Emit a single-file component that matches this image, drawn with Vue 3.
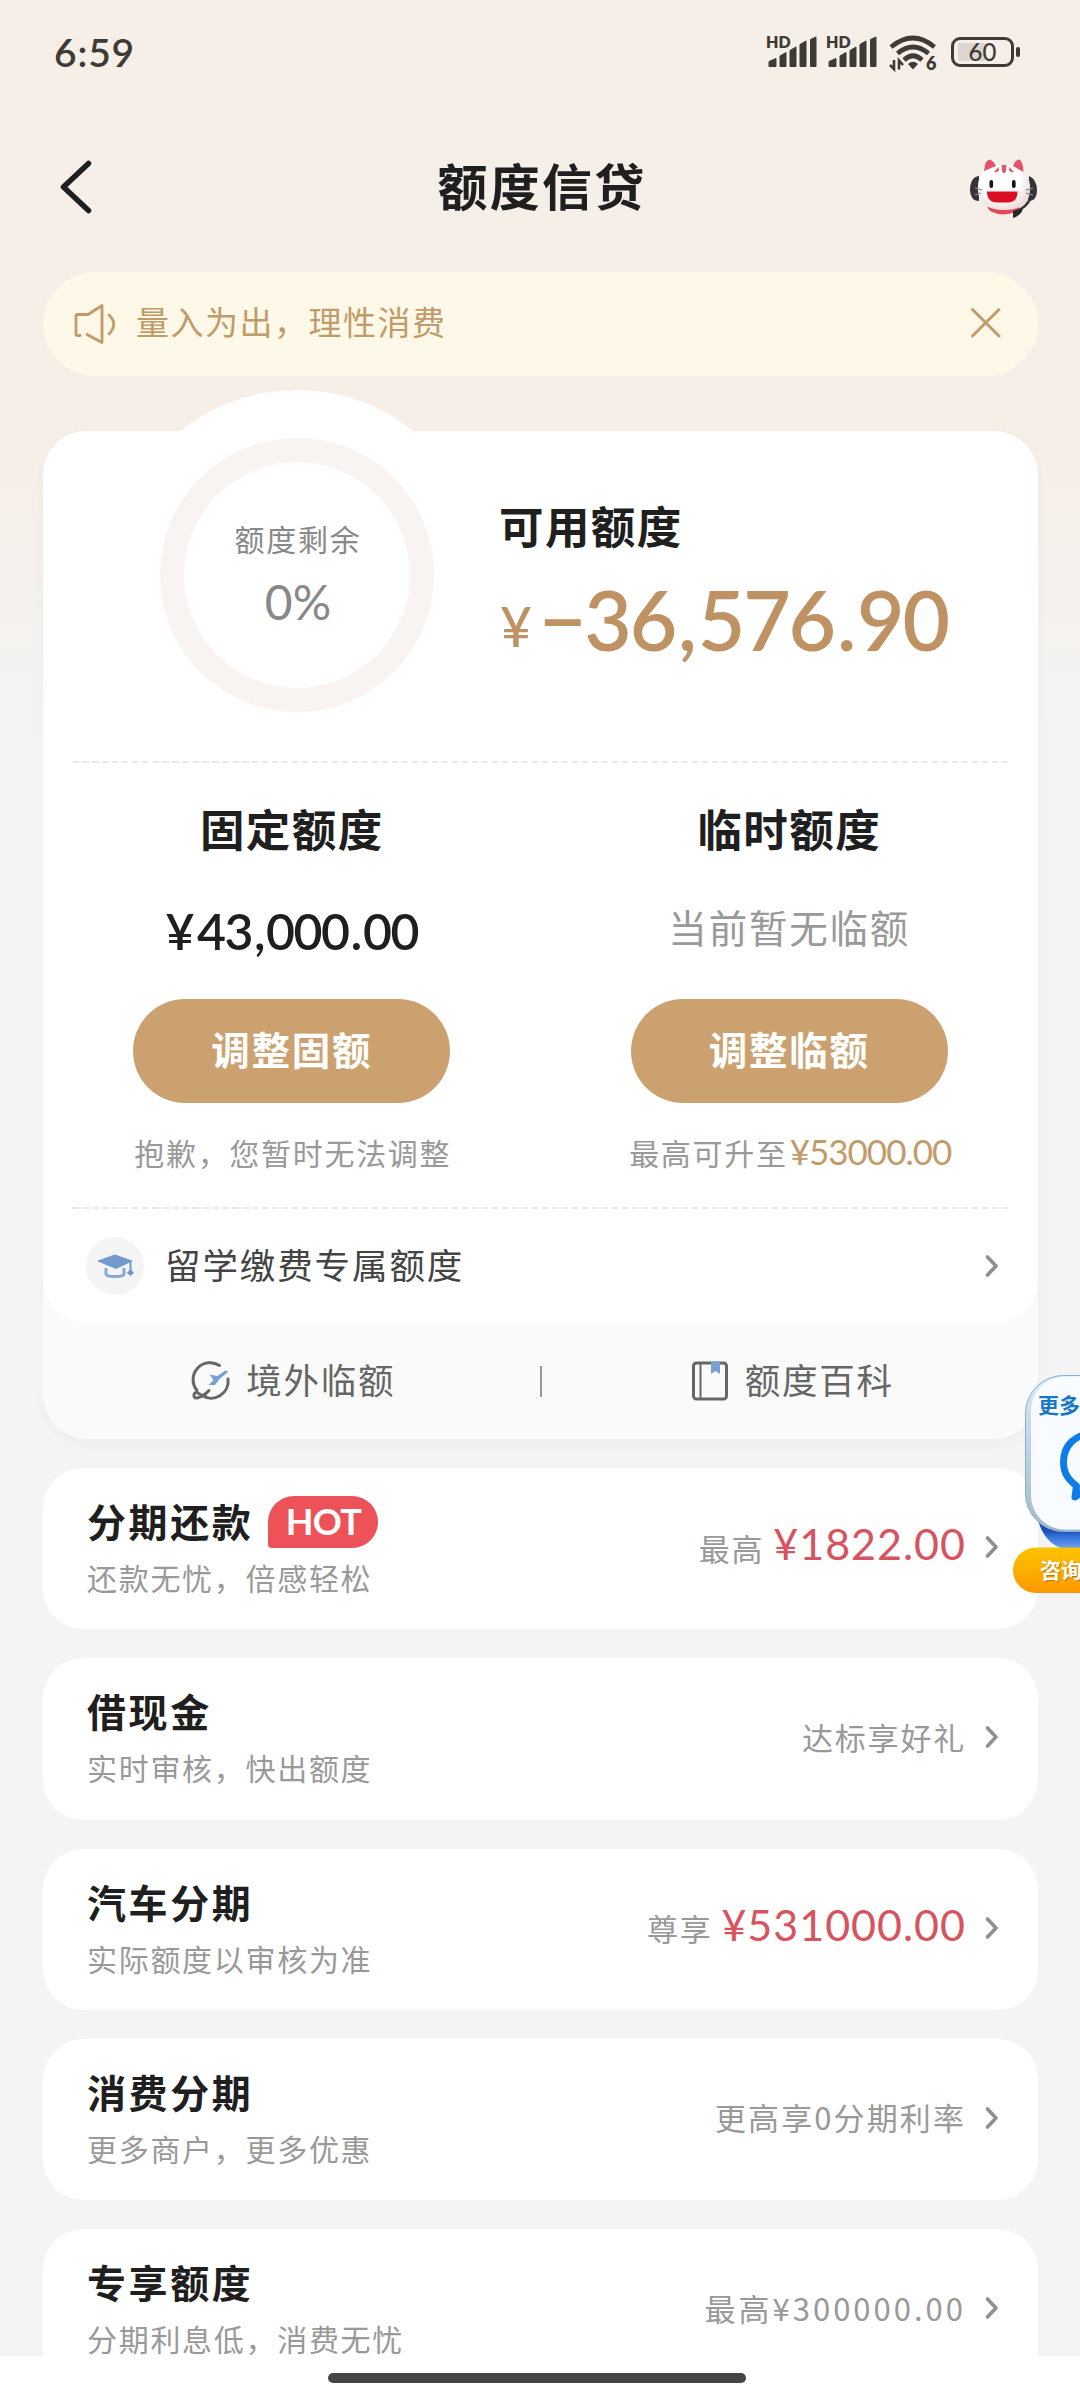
<script setup>
const products = [
  { title: '分期还款', hot: true, desc: '还款无忧，倍感轻松', label: '最高', amount: '¥1822.00' },
  { title: '借现金', desc: '实时审核，快出额度', note: '达标享好礼' },
  { title: '汽车分期', desc: '实际额度以审核为准', label: '尊享', amount: '¥531000.00' },
  { title: '消费分期', desc: '更多商户，更多优惠', note: '更高享0分期利率', noteSpacing: 2.1 },
  { title: '专享额度', desc: '分期利息低，消费无忧', note: '最高¥300000.00', noteSpacing: 3 },
]
const bars = [
  'M1 29.5 v-5 l7-3 v8 z',
  'M12 29.5 v-10.5 l6-3.5 v14 z',
  'M22 29.5 v-16 l6-3.5 v19.500 z',
  'M32 29.500 v-22 l6-3.500 v25.500 z',
  'M42.500 29.500 v-27 l5.500-2.500 v29.500 z',
]
</script>

<template>
  <div class="screen">
    <header class="status">
      <span class="time">6:59</span>
      <div class="signals">
        <div v-for="n in 2" :key="n" class="signal">
          <svg width="50" height="32" viewBox="0 0 50 32">
            <path v-for="b in bars" :key="b" :d="b" fill="#3f3a35" stroke="#3f3a35" stroke-width="1" stroke-linejoin="round" />
          </svg>
          <span class="hd">HD</span>
        </div>
        <svg class="wifi" width="48" height="36" viewBox="0 0 48 36">
          <g fill="none" stroke="#3f3a35" stroke-width="4.600">
            <path d="M2 12 Q24 -6 45.500 12" />
            <path d="M8.500 18.500 Q24 5.500 39.500 18.500" />
            <path d="M15 25 Q24 16.500 33 25" />
          </g>
          <path d="M19 29 q5 -4.500 10 0 l-5 5.500 z" fill="#3f3a35" />
          <path d="M5 25 v9 l-4-4 M10 34.500 v-9 l4 4.500" fill="none" stroke="#3f3a35" stroke-width="2.600" />
          <text x="37" y="35" class="wifi-gen">6</text>
        </svg>
        <div class="battery">
          <span class="battery-level">60</span>
        </div>
      </div>
    </header>

    <nav class="nav">
      <svg class="back" width="34" height="56" viewBox="0 0 34 56">
        <path d="M29.500 4.500 L4.500 28 L29.500 51.500" fill="none" stroke="#1f1f1f" stroke-width="5.500" stroke-linecap="round" stroke-linejoin="round" />
      </svg>
      <h1>额度信贷</h1>
      <svg class="cat" width="70" height="64" viewBox="0 0 70 64">
        <defs>
          <radialGradient id="face" cx=".42" cy=".4" r=".62">
            <stop offset=".6" stop-color="#fff" /><stop offset="1" stop-color="#eedcdc" />
          </radialGradient>
        </defs>
        <path d="M10 19 Q1 20 1 34 Q2 44 10 44 Z M60 19 Q68 22 68 34 Q68 44 59 44 Z" fill="#34343a" />
        <path d="M62 40 Q57 52 46 54" fill="none" stroke="#34343a" stroke-width="2.500" />
        <ellipse cx="34.500" cy="49" rx="16" ry="8.500" fill="#e0485a" />
        <path d="M14 15 Q15 3 21 2 Q25 3 28 8 L43 8 Q46 2 51 2 Q55 5 56 16 Q62 24 61 33 Q60 53 35 53 Q10 53 9 34 Q8 22 14 15 Z" fill="url(#face)" />
        <path d="M15 14 Q16 3 20.500 2.500 Q25 4 27 9 Z M44 9 Q46 3 50.500 2.500 Q54 5 54.500 15 Z" fill="#e65368" />
        <path d="M32.500 8 h5 l-.5 6.500 -2 2 -2 -2z M25 15 l4.500-5 .5 3.500-3 2z M45 15 l-4.500-5 -.5 3.500 3 2z" fill="#e0596b" />
        <rect x="20.500" y="23" width="3.600" height="8" rx="1.800" fill="#151515" />
        <rect x="43" y="23" width="3.600" height="8" rx="1.800" fill="#151515" />
        <path d="M18 34.500 H48.500 Q48.500 45.500 38.500 45.500 H28.500 Q18 45.500 18 34.500 Z" fill="#dc0f22" />
        <path d="M6 31 L13 33 M6 38 L12 36 M64 31 L57 33 M64 38 L57 36" stroke="#8d8a8c" stroke-width="1.300" />
        <path d="M44 54 L54 51 Q53 58 44 61 Z" fill="#26262b" />
      </svg>
    </nav>

    <section class="notice">
      <svg width="43" height="42" viewBox="0 0 43 42">
        <g fill="none" stroke="#c29b6a" stroke-width="2.800" stroke-linecap="round" stroke-linejoin="round">
          <path d="M6 32.500 H3.500 Q2 32.500 2 31 V13 Q2 11.500 3.500 11.500 H14 L28 2.500 V39.500 L13 31.500" />
          <path d="M35 12 Q44.500 21 35 31" />
        </g>
      </svg>
      <span>量入为出，理性消费</span>
      <svg class="close" width="32" height="32" viewBox="0 0 32 32">
        <path d="M2.500 2.500 L29 29 M29 2.500 L2.500 29" stroke="#c29b6a" stroke-width="3" stroke-linecap="round" />
      </svg>
    </section>

    <section class="quota">
      <div class="quota-main">
        <div class="overview">
          <div class="halo">
            <div class="ring">
              <span class="ring-label">额度剩余</span>
              <span class="ring-value">0%</span>
            </div>
          </div>
          <div class="available">
            <h2>可用额度</h2>
            <p class="balance"><small>¥</small>−36<i>,</i>576<i>.</i>90</p>
          </div>
        </div>
        <div class="dash"></div>
        <div class="columns">
          <div class="column">
            <h2>固定额度</h2>
            <p class="fixed"><b>¥</b>43<i>,</i>000<i>.</i>00</p>
            <button>调整固额</button>
            <p class="foot">抱歉，您暂时无法调整</p>
          </div>
          <div class="column">
            <h2>临时额度</h2>
            <p class="none">当前暂无临额</p>
            <button>调整临额</button>
            <p class="foot">最高可升至<b>¥53000.00</b></p>
          </div>
        </div>
        <div class="dash"></div>
        <div class="study">
          <svg width="58" height="58" viewBox="0 0 58 58">
            <circle cx="29" cy="29" r="29" fill="#f4f4f5" />
            <path d="M12 24 L29 18 L46 24 L30 31.500 Z" fill="#7199cc" stroke="#7199cc" stroke-width="1" stroke-linejoin="round" />
            <path d="M20 31 V37 Q20 39.500 29 39.500 Q38 39.500 38 37 V31" fill="none" stroke="#86a8d2" stroke-width="3" />
            <path d="M44.500 25 V34" stroke="#7199cc" stroke-width="2" />
            <path d="M44.500 32 L48 36 L44.500 39 L41 36 Z" fill="#7199cc" />
          </svg>
          <span>留学缴费专属额度</span>
          <svg class="arrow" width="16" height="24" viewBox="0 0 16 24"><path d="M3.500 3 L12 12 L3.500 21" /></svg>
        </div>
      </div>
      <div class="links">
        <div class="link">
          <svg width="38" height="40" viewBox="0 0 38 40">
            <path d="M27.500 4.500 A17 17 0 0 0 5 29.500 M36 18 A17 17 0 0 1 10 34.500 M17 29.500 Q12 35 5 37 Q1.500 37.500 2 34 Q2.500 31 5 31.500 Q10 35 14 35.500" fill="none" stroke="#666" stroke-width="3" stroke-linecap="round" />
            <path d="M17.500 13.500 l8 1.500 7-5 q4-1.500 3 1.500 l-7.500 6 -5 6.500 h-6.500 l5-5 z" fill="#79a0d0" />
          </svg>
          <span>境外临额</span>
        </div>
        <i class="split"></i>
        <div class="link">
          <svg width="38" height="40" viewBox="0 0 38 40">
            <rect x="2.500" y="2" width="33" height="36" rx="3" fill="none" stroke="#666" stroke-width="3" />
            <path d="M9.500 3 V38" stroke="#666" stroke-width="2" />
            <path d="M20 0.500 h9 v12.500 l-4.500-3 -4.500 3z" fill="#79a0d0" />
          </svg>
          <span>额度百科</span>
        </div>
      </div>
    </section>

    <section v-for="p in products" :key="p.title" class="product">
      <div class="info">
        <h3>{{ p.title }}<span v-if="p.hot" class="hot">HOT</span></h3>
        <p>{{ p.desc }}</p>
      </div>
      <div class="side">
        <span v-if="p.note" class="note" :style="{ letterSpacing: (p.noteSpacing || 1.8) + 'px' }">{{ p.note }}</span>
        <template v-else>
          <span class="label">{{ p.label }}</span>
          <span class="amount">{{ p.amount }}</span>
        </template>
        <svg class="arrow" width="16" height="24" viewBox="0 0 16 24"><path d="M3.500 3 L12 12 L3.500 21" /></svg>
      </div>
    </section>

    <aside class="float">
      <svg width="67" height="222" viewBox="0 0 67 222">
        <defs>
          <linearGradient id="pill" x1="0" y1="0" x2="0" y2="1">
            <stop offset="0" stop-color="#fcc400" /><stop offset="1" stop-color="#ff9800" />
          </linearGradient>
          <linearGradient id="base" x1="0" y1="0" x2="0" y2="1">
            <stop offset=".6" stop-color="#1b4fb8" /><stop offset=".75" stop-color="#3a78dc" /><stop offset="1" stop-color="#75a9f5" />
          </linearGradient>
          <linearGradient id="edge" x1="0" y1="0" x2="0" y2="1">
            <stop offset="0" stop-color="#d9ebf9" /><stop offset="1" stop-color="#a5b8c8" />
          </linearGradient>
        </defs>
        <path d="M23 138 Q28 174 56 178 H67 V130 H23 Z" fill="url(#base)" />
        <rect x="12.500" y="3.500" width="160" height="156" rx="38" fill="url(#edge)" stroke="#7fb2da" stroke-width="1" />
        <rect x="18" y="4.500" width="155" height="153" rx="34" fill="#f8fbff" />
        <path d="M85 61 C60 61 50.500 75 50.500 90 C50.500 102 56 108 63.500 114 L62 125 L70 119" fill="none" stroke="#0f7de6" stroke-width="7" stroke-linejoin="round" />
        <rect x="0" y="175.500" width="120" height="45.500" rx="22.700" fill="url(#pill)" />
        <text x="25" y="40.500" class="float-top">更多</text>
        <text x="27" y="205.500" class="float-pill">咨询</text>
      </svg>
    </aside>

    <footer class="home"><i></i></footer>
  </div>
</template>

<style>
body { margin: 0; background: #fff; }
</style>

<style scoped>
.screen {
  position: relative;
  box-sizing: border-box;
  width: 1080px;
  height: 2400px;
  overflow: hidden;
  font-family: "Noto Sans CJK SC", sans-serif;
  color: #1f1f1f;
  background: linear-gradient(#f6efe8 0, #f6efe8 480px, #f4f4f4 740px, #f4f4f4 100%);
}
h1, h2, h3, p { margin: 0; font-weight: 700; }
svg { display: block; flex: none; overflow: visible; }

.status { display: flex; justify-content: space-between; height: 106px; padding: 0 57px 0 54px; box-sizing: border-box; }
.time { font: 600 39px/104px Lato, sans-serif; letter-spacing: 0.800px; color: #3f3a35; }
.signals { display: flex; align-items: flex-start; padding-top: 36px; }
.signal { position: relative; width: 60px; }
.signal svg { margin: 1px 0 0 2px; }
.hd { position: absolute; left: 0; top: -2px; font: 800 16px/16px Lato, sans-serif; color: #3f3a35; }
.wifi { margin: -1px 0 0 3px; }
.wifi-gen { font: 800 18px Lato, sans-serif; fill: #3f3a35; }
.battery {
  position: relative; width: 57px; height: 24px; margin: 1px 9px 0 14px;
  border: 3px solid #3f3a35; border-radius: 9px; text-align: center;
  background: linear-gradient(#ddd5cf, #ddd5cf) 4px 3px / 27px 18px no-repeat;
}
.battery::after { content: ""; position: absolute; right: -9px; top: 7px; width: 4px; height: 10px; border-radius: 2px; background: #3f3a35; }
.battery-level { display: block; font: 500 24px/24px Lato, sans-serif; color: #3f3a35; }

.nav { display: flex; align-items: center; justify-content: space-between; height: 166px; padding: 0 41px 0 59px; box-sizing: border-box; }
.nav h1 { font-size: 50px; line-height: 60px; letter-spacing: 2.200px; margin: -10px 0 0 22px; }
.back { margin-top: -4px; }

.notice { display: flex; align-items: center; height: 104px; margin: 0 42px 0 43px; padding: 0 36px 0 31px; border-radius: 52px; background: #fef8e8; color: #c29b6a; box-sizing: border-box; }
.notice span { margin: -6px auto 0 19px; font-size: 33px; line-height: 50px; letter-spacing: 1.500px; }
.notice .close { margin-top: -3px; }

.quota { margin: 55px 42px 0 43px; border-radius: 44px; background: #fafafa; box-shadow: 0 4px 12px rgba(0, 0, 0, .03); }
.quota-main { border-radius: 44px; background: #fff; }
.overview { display: flex; height: 330px; }
.halo { flex: none; display: flex; align-items: center; justify-content: center; width: 370px; height: 370px; margin: -41px 0 0 69px; border-radius: 50%; background: #fff; }
.ring { display: flex; flex-direction: column; align-items: center; width: 274px; height: 274px; padding: 56px 0 0 2px; box-sizing: border-box; border: 24.500px solid #f9f4f1; border-radius: 50%; color: #888; }
.ring-label { font-size: 30px; line-height: 40px; letter-spacing: 1.700px; }
.ring-value { margin-top: 19px; font: 400 48px/50px Lato, sans-serif; letter-spacing: 0; }
.available { padding: 64px 0 0 17px; }
h2 { font-size: 44.500px; line-height: 60px; letter-spacing: 1.400px; }
.balance { display: flex; margin-top: 19px; font: 600 82px/90px Lato, sans-serif; letter-spacing: -2.200px; color: #be9263; white-space: nowrap; }
.balance i, .fixed i { font-style: normal; margin: 0 3px; }
.balance small { width: 40px; padding: 5px 0 0 1px; box-sizing: border-box; font: 500 55px/94px Lato, sans-serif; letter-spacing: 0; }
.dash { height: 2px; margin: 0 28px 0 29px; background: repeating-linear-gradient(90deg, #e9e9e9 0 6.500px, transparent 6.500px 10px); }
.columns { display: flex; }
.column { flex: 1; display: flex; flex-direction: column; align-items: center; padding: 35px 0; }
.fixed { margin-top: 43px; font: 600 50px/60px Lato, sans-serif; letter-spacing: -1.500px; }
.fixed i { margin: 0 2px; }
.fixed b { margin-right: 4px; font-weight: 600; }
.none { margin-top: 40px; font-size: 38.500px; line-height: 56px; padding-bottom: 7px; letter-spacing: 1.800px; font-weight: 400; color: #999; }
button { width: 317px; height: 104px; margin-top: 38px; padding: 0 0 7px; border: 0; border-radius: 52px; background: #cba26f; color: #fff; font: 700 38.500px/60px "Noto Sans CJK SC", sans-serif; letter-spacing: 1.800px; }
.foot { margin-top: 29px; padding-left: 2px; font-size: 30px; font-weight: 400; line-height: 40px; letter-spacing: 1.700px; color: #999; white-space: nowrap; }
.foot b { margin-left: 2px; font: 400 35px/36px Lato, sans-serif; letter-spacing: -1px; color: #c29b6a; }

.study { display: flex; align-items: center; height: 114px; padding: 0 38px 0 43px; box-sizing: border-box; }
.study span { margin: -6px auto 0 21px; font-size: 35.500px; letter-spacing: 1.900px; color: #444; }
.arrow path { fill: none; stroke: #8f8f8f; stroke-width: 3.600; stroke-linecap: round; stroke-linejoin: round; }
.links { display: flex; align-items: center; height: 116px; }
.link { flex: 1; display: flex; align-items: center; justify-content: center; gap: 16px; padding-left: 5px; font-size: 35.500px; letter-spacing: 1.800px; color: #666; }
.link span { margin-top: -5px; }
.split { width: 2px; height: 31px; background: #999; }

.product { display: flex; justify-content: space-between; height: 161.300px; margin: 29px 42px 0 43px; padding: 0 38px 0 44px; box-sizing: border-box; border-radius: 40px; background: #fff; }
.info { padding-top: 24px; }
h3 { display: flex; align-items: center; height: 56px; font-size: 39px; line-height: 56px; letter-spacing: 2.600px; }
.info p { margin-top: 9px; font-size: 30px; font-weight: 400; line-height: 40px; letter-spacing: 1.700px; color: #999; }
.hot { width: 110px; height: 52px; margin: 4px 0 0 15px; border-radius: 26px 26px 26px 4px; background: #ec5257; color: #fff; font: 700 36px/51px Lato, sans-serif; letter-spacing: -.8px; text-align: center; }
.side { display: flex; align-items: center; height: 160px; }
.side .arrow { margin: -2px 0 0 18px; }
.note, .label { font-size: 31px; line-height: 40px; letter-spacing: 1.700px; color: #999; margin-top: -3px; }
.label { margin: -1px 9px 0 0; }
.amount { font: 400 43px/50px Lato, sans-serif; letter-spacing: 1px; color: #d6535f; margin-top: -8px; }

.float { position: absolute; right: 0; top: 1372px; }
.float-top { font: 700 21px "Noto Sans CJK SC", sans-serif; fill: #1778c8; }
.float-pill { font: 700 21px "Noto Sans CJK SC", sans-serif; fill: #fff; text-shadow: 1px 1px 1px #b97a00; }
.home { position: absolute; left: 0; right: 0; bottom: 0; display: flex; justify-content: center; height: 44px; padding-right: 6px; box-sizing: border-box; background: #fff; }
.home i { width: 418px; height: 10px; margin-top: 17px; border-radius: 5px; background: #454545; }
</style>
